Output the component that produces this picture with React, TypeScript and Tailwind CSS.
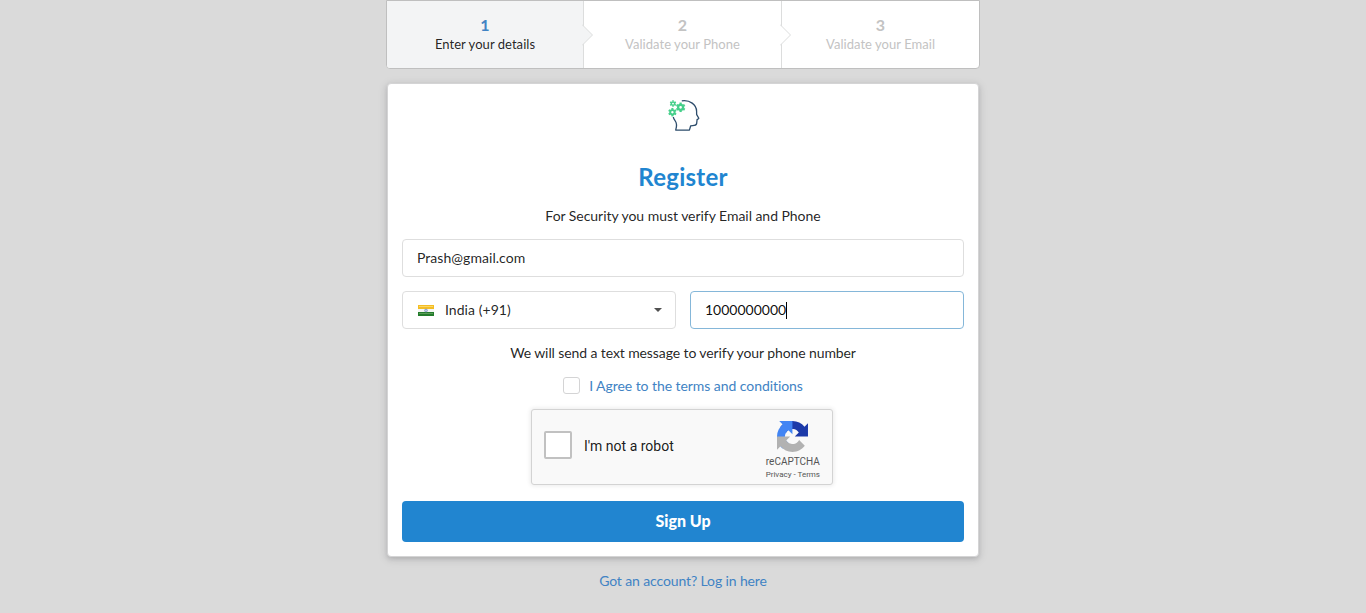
import React from "react";

const steps = [
  { n: "1", label: "Enter your details" },
  { n: "2", label: "Validate your Phone" },
  { n: "3", label: "Validate your Email" },
];

function Gear({ x, y, r }: { x: number; y: number; r: number }) {
  return (
    <g transform={`translate(${x} ${y})`} stroke="#45cf8a" fill="none">
      <circle r={r * 0.65} strokeWidth={r * 0.6} />
      {[0, 60, 120, 180, 240, 300].map((a) => (
        <path key={a} d={`M0 ${-r * 0.8}V${-r * 1.25}`} strokeWidth={r * 0.6} transform={`rotate(${a})`} />
      ))}
    </g>
  );
}

function Logo() {
  return (
    <svg className="block" width="36" height="36" viewBox="0 0 36 36">
      <path
        d="M14.8 2.9C23 1.7 29.3 6.6 29.6 13.2C29.7 14.5 29.5 15.6 29.7 16.6L31.8 20.3C31.8 21 30.6 21 30.1 21.5L29.6 25.8C28.9 28.3 25.4 27.2 23.7 27.8L22.4 32.1H8.7C9.8 28.5 10.3 25.7 8.2 22.9Q6.5 20.5 6.3 19"
        fill="none"
        stroke="#2d4c6b"
        strokeWidth="1.3"
        strokeLinejoin="round"
      />
      <Gear x={6} y={5.6} r={2.6} />
      <Gear x={13.6} y={9.3} r={3.8} />
      <Gear x={5.4} y={14.2} r={3.4} />
    </svg>
  );
}

function Flag() {
  return (
    <svg className="block" width="16" height="11" viewBox="0 0 16 11">
      <path fill="#f4bd23" d="M0 0h16v4H0z" />
      <path fill="#fbd765" d="M1 1h14v1H1z" />
      <path fill="#f5f6f5" d="M0 4h16v3H0z" />
      <path fill="#247c2c" d="M0 7h16v4H0z" />
      <path fill="#5a9c58" d="M1 8h14v1H1z" />
      <circle cx="8" cy="5.5" r="1.4" fill="#c3cce6" stroke="#8094c4" strokeWidth=".8" />
    </svg>
  );
}

function CaptchaLogo() {
  return (
    <svg className="block" width="31" height="31" viewBox="0 0 64 64">
      <path
        fill="#1c3aa9"
        d="M64 31.955l-.033-1.37V4.687l-7.16 7.16C50.948 4.674 42.033.093 32.05.093c-10.4 0-19.622 4.96-25.458 12.64l11.736 11.86a15.55 15.55 0 0 1 4.754-5.334c2.05-1.6 4.952-2.906 8.968-2.906.485 0 .86.057 1.135.163 4.976.393 9.288 3.14 11.828 7.124l-8.307 8.307L64 31.953"
      />
      <path
        fill="#4285f4"
        d="M31.862.094l-1.37.033H4.594l7.16 7.16C4.58 13.147 0 22.06 0 32.046c0 10.4 4.96 19.622 12.64 25.458L24.5 45.768a15.55 15.55 0 0 1-5.334-4.754c-1.6-2.05-2.906-4.952-2.906-8.968 0-.485.057-.86.163-1.135.393-4.976 3.14-9.288 7.124-11.828l8.307 8.307L31.86.095"
      />
      <path
        fill="#b2b2b2"
        d="M.001 32.045l.033 1.37v25.898l7.16-7.16c5.86 7.173 14.774 11.754 24.76 11.754 10.4 0 19.622-4.96 25.458-12.64l-11.736-11.86a15.55 15.55 0 0 1-4.754 5.334c-2.05 1.6-4.952 2.906-8.968 2.906-.485 0-.86-.057-1.135-.163-4.976-.393-9.288-3.14-11.828-7.124l8.307-8.307L0 32.046"
      />
    </svg>
  );
}

export default function App() {
  return (
    <div className="flex h-[613px] w-full flex-col items-center overflow-hidden bg-[#dadada] font-['Lato',sans-serif] text-[14px] leading-5 text-black/87">
      <div className="flex h-[69px] w-[594px] shrink-0 rounded-b-[4px] border border-[#bfbfbf] bg-white">
        {steps.map((s, i) => (
          <div
            key={s.n}
            className={
              "relative flex flex-col items-center pt-[15px] " +
              (i === 0 ? "w-[197px] rounded-bl-[3px] bg-[#f3f4f5] text-black/87 " : "flex-1 text-[#c3c3c3] ") +
              (i < 2 ? "border-r border-[#dcdddd]" : "")
            }
          >
            <div className={"h-[19px] text-[16px] leading-[18px] font-bold " + (i === 0 ? "text-[#4183c4]" : "")}>{s.n}</div>
            <div className="text-[13px] leading-[19px] tracking-[0.04px]">{s.label}</div>
            {i < 2 && (
              <svg className="absolute top-[22px] -right-[11px] z-10" width="12" height="24" viewBox="0 0 12 24">
                <path d="M0 1.5L10.5 12L0 22.5" fill={i === 0 ? "#f3f4f5" : "#fff"} stroke="#dcdddd" />
              </svg>
            )}
          </div>
        ))}
      </div>

      <main className="mt-[14px] flex h-[474px] w-[592px] shrink-0 flex-col items-center rounded-[4px] border border-[#d4d4d5] bg-white px-[14px] shadow-[0_2px_4px_rgba(34,36,38,0.12),0_2px_10px_rgba(34,36,38,0.15)]">
        <div className="mt-[14px] h-9 pl-[3px]">
          <Logo />
        </div>
        <h1 className="mt-[27px] text-[24px] leading-[32px] font-bold tracking-[0.25px] text-[#2185d0]">Register</h1>
        <p className="mt-[13px] tracking-[-0.04px]">For Security you must verify Email and Phone</p>
        <div className="mt-[13px] flex h-[38px] w-full items-center rounded-[4px] border border-[#dedede] px-[14px] tracking-[0.05px]">Prash@gmail.com</div>
        <div className="mt-[14px] flex w-full gap-[14px]">
          <div className="flex h-[38px] flex-1 items-center rounded-[4px] border border-[#dedede] px-[14px]">
            <div className="ml-px">
              <Flag />
            </div>
            <span className="ml-[11px] tracking-[0.05px]">India (+91)</span>
            <svg className="mr-[-1px] ml-auto" width="8" height="4" viewBox="0 0 8 4">
              <path fill="#505050" d="M0 0h8L4 4z" />
            </svg>
          </div>
          <div className="flex h-[38px] flex-1 items-center rounded-[4px] border border-[#85b7d9] px-[14px] text-black/95">
            1000000000
            <span className="h-[17px] w-px bg-black" />
          </div>
        </div>
        <p className="mt-[14px] tracking-[-0.1px]">We will send a text message to verify your phone number</p>
        <div className="mt-[13px] flex h-5 items-center">
          <span className="mb-[2px] h-[17px] w-[17px] rounded-[3px] border border-[#d4d4d5]" />
          <a className="ml-[9px] tracking-[-0.06px] text-[#4183c4]">I Agree to the terms and conditions</a>
        </div>
        <div className="mt-[13px] mr-[2px] flex h-[76px] w-[302px] items-center rounded-[3px] border border-[#d3d3d3] bg-[#f9f9f9] pl-3 font-['Roboto',sans-serif] shadow-[0_0_4px_1px_rgba(0,0,0,0.08)]">
          <span className="mb-1 h-7 w-7 rounded-[2px] border-2 border-[#c1c1c1] bg-white" />
          <span className="mb-[2px] ml-3 text-[14px] text-black/90">I'm not a robot</span>
          <div className="mt-[7px] mr-3 ml-auto flex flex-col items-center text-[#555]">
            <CaptchaLogo />
            <span className="mt-[4px] text-[10px] leading-[12px]">reCAPTCHA</span>
            <span className="text-[8px] leading-[13px]">Privacy - Terms</span>
          </div>
        </div>
        <button className="mt-4 h-[41px] w-full shrink-0 rounded-[4px] bg-[#2185d0] pb-[2px] text-[16px] font-black text-white">Sign Up</button>
      </main>
      <a className="mt-[14px] tracking-[-0.12px] text-[#4183c4]">Got an account? Log in here</a>
    </div>
  );
}
